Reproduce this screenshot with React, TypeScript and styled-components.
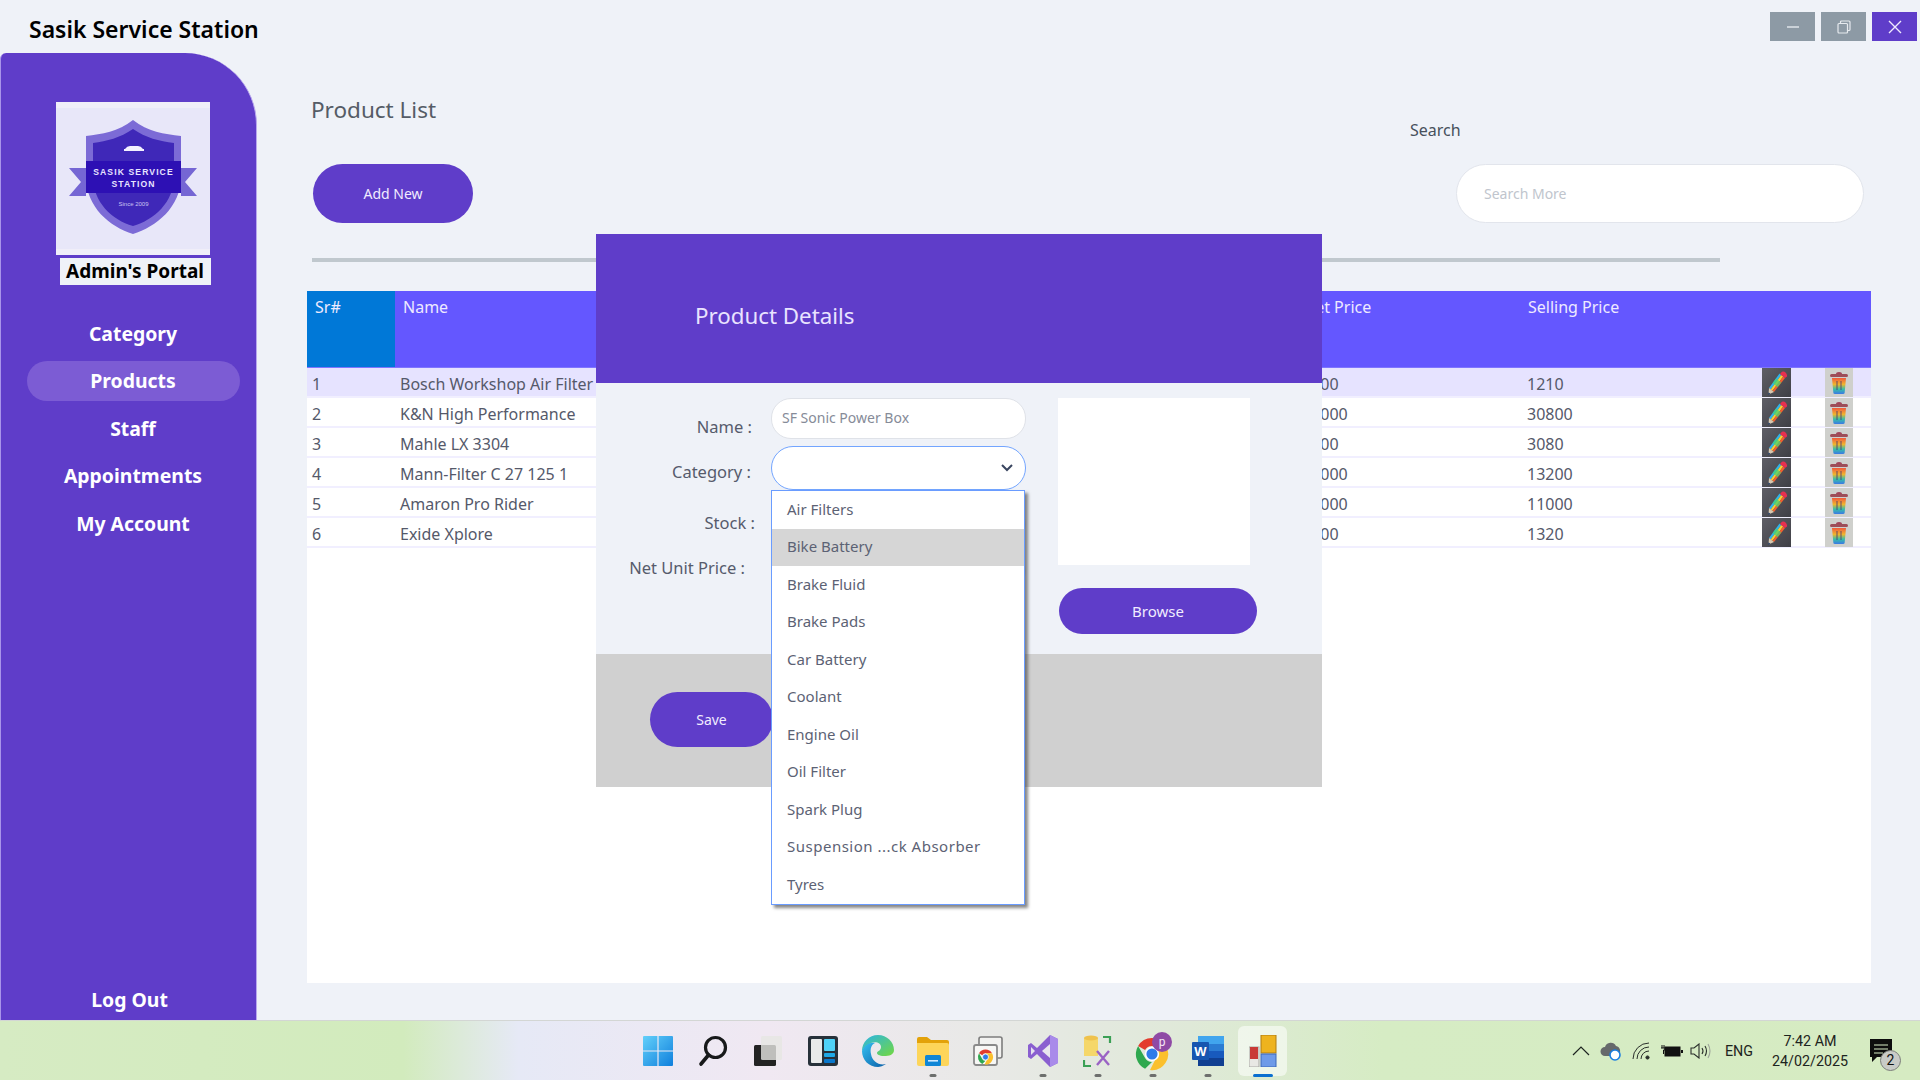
import React from "react";
import styled, { createGlobalStyle } from "styled-components";

const PURPLE = "#5f3dc9";
const BG = "#eff2f8";
const FONT = '"Noto Sans", "Open Sans", sans-serif';

const GlobalStyle = createGlobalStyle`
  html, body {
    margin: 0;
    padding: 0;
    background: ${BG};
    overflow: hidden;
  }
  * {
    box-sizing: border-box;
  }
`;

const Screen = styled.div`
  width: 1920px;
  height: 1080px;
  display: flex;
  flex-direction: column;
  position: relative;
  overflow: hidden;
  font-family: ${FONT};
  background: ${BG};
`;

const TitleBar = styled.div`
  height: 53px;
  flex: none;
  display: flex;
  justify-content: space-between;
  padding: 12px 3px 0 29px;
`;

const AppTitle = styled.h1`
  margin: 1px 0 0;
  font-size: 23px;
  line-height: 32px;
  font-weight: 600;
  color: #000;
`;

const WindowButtons = styled.div`
  display: flex;
  gap: 6px;
`;

const WindowButton = styled.div<{ $close?: boolean }>`
  width: 45px;
  height: 29px;
  display: flex;
  align-items: center;
  justify-content: center;
  background: ${(p) => (p.$close ? PURPLE : "#8d9aa5")};
`;

const Middle = styled.div`
  flex: 1;
  display: flex;
  min-height: 0;
`;

const Sidebar = styled.aside`
  width: 257px;
  flex: none;
  display: flex;
  flex-direction: column;
  align-items: center;
  background: ${PURPLE};
  border-top-right-radius: 72px;
  border-top-left-radius: 6px;
  border-right: 1px solid #b9a8ee;
  border-left: 1px solid #a994ea;
  padding: 49px 0 0 10px;
`;

const LogoBox = styled.div`
  width: 154px;
  height: 153px;
  margin-right: 1px;
`;

const PortalLabel = styled.div`
  width: 151px;
  height: 27px;
  margin-top: 3px;
  margin-left: 3px;
  background: ${BG};
  color: #000;
  font-size: 19px;
  line-height: 26px;
  font-weight: 700;
  text-align: center;
  white-space: nowrap;
`;

const NavList = styled.nav`
  width: 100%;
  margin-top: 28px;
  display: flex;
  flex-direction: column;
  align-items: center;
`;

const NavItem = styled.div<{ $active?: boolean }>`
  width: 213px;
  height: 40px;
  margin-bottom: 7.5px;
  margin-left: -1px;
  border-radius: 20px;
  display: flex;
  align-items: center;
  justify-content: center;
  color: #fff;
  font-size: 19.4px;
  font-weight: 700;
  white-space: nowrap;
  background: ${(p) => (p.$active ? "#7c5cd4" : "transparent")};
`;

const LogOut = styled(NavItem)`
  margin-top: auto;
  margin-bottom: 1px;
  margin-left: -8px;
`;

const Main = styled.main`
  flex: 1;
  min-width: 0;
  padding: 0 49px 0 50px;
  display: flex;
  flex-direction: column;
`;

const Toolbar = styled.div`
  height: 170px;
  flex: none;
  display: flex;
  justify-content: space-between;
  padding: 0 7px 0 6px;
`;

const ToolbarLeft = styled.div`
  display: flex;
  flex-direction: column;
  align-items: flex-start;
`;

const PageTitle = styled.h2`
  margin: 40px 0 0 -2px;
  font-size: 22.5px;
  line-height: 34px;
  font-weight: 400;
  color: #555c66;
`;

const PillButton = styled.button<{ $w: number; $h: number }>`
  width: ${(p) => p.$w}px;
  height: ${(p) => p.$h}px;
  border: none;
  border-radius: ${(p) => p.$h / 2}px;
  background: ${PURPLE};
  color: #f1ecff;
  font-family: ${FONT};
  font-size: 14px;
  padding: 0;
  flex: none;
`;

const AddButton = styled(PillButton)`
  margin-top: 37px;
`;

const SearchArea = styled.div`
  display: flex;
  align-items: flex-start;
`;

const SearchLabel = styled.div`
  margin-top: 66px;
  margin-right: -4px;
  width: 50px;
  font-size: 16px;
  line-height: 22px;
  color: #47505c;
  white-space: nowrap;
`;

const SearchInput = styled.input`
  margin-top: 111px;
  width: 408px;
  height: 59px;
  border: 1.5px solid #e2e5ec;
  border-radius: 30px;
  background: #fff;
  padding: 0 27px;
  font-family: ${FONT};
  font-size: 14px;
  outline: none;
  &::placeholder {
    color: #c0c5cd;
  }
`;

const Divider = styled.div`
  width: 1408px;
  height: 4px;
  margin: 35px 0 29px 5px;
  background: #c0c8ce;
  flex: none;
`;

const Table = styled.div`
  width: 1564px;
  height: 692px;
  background: #fff;
  flex: none;
`;

const COLUMNS = "88px 902px 225px 240px 29px 34px 28px 18px";

const HeaderRow = styled.div`
  display: grid;
  grid-template-columns: ${COLUMNS};
  height: 77px;
  background: #6457ff;
  border-bottom: 1px solid #7f75ff;
`;

const HeaderCell = styled.div<{ $blue?: boolean; $pad?: number }>`
  padding: 4px 0 0 ${(p) => p.$pad ?? 6}px;
  font-size: 16px;
  line-height: 24px;
  color: #eeeaff;
  white-space: nowrap;
  background: ${(p) => (p.$blue ? "#0078d7" : "transparent")};
`;

const Row = styled.div<{ $selected?: boolean }>`
  display: grid;
  grid-template-columns: ${COLUMNS};
  height: 30px;
  border-bottom: 2px solid #f1efff;
  background: ${(p) => (p.$selected ? "#e6e3ff" : "#fff")};
`;

const Cell = styled.div`
  padding: 0 0 0 5px;
  font-size: 16px;
  line-height: 32px;
  height: 28px;
  color: #55596a;
  white-space: nowrap;
  overflow: hidden;
`;

const ActionCell = styled.div<{ $dark?: boolean }>`
  height: 29px;
  display: flex;
  align-items: center;
  justify-content: center;
  background: ${(p) =>
    p.$dark ? "linear-gradient(135deg, #5f5f66, #3f3f46)" : "#cfd0cc"};
`;

const Modal = styled.section`
  position: absolute;
  left: 596px;
  top: 234px;
  width: 726px;
  height: 553px;
  display: flex;
  flex-direction: column;
  background: ${BG};
`;

const ModalHeader = styled.header`
  height: 149px;
  flex: none;
  background: ${PURPLE};
  padding: 64px 0 0 99px;
  color: #e9e3ff;
  font-size: 22.3px;
  line-height: 35px;
`;

const ModalBody = styled.div`
  height: 271px;
  flex: none;
  display: flex;
  padding-top: 15px;
`;

const FormColumn = styled.div`
  width: 430px;
  flex: none;
`;

const Field = styled.div<{ $gap: number; $h: number }>`
  display: grid;
  grid-template-columns: 175px 255px;
  height: ${(p) => p.$h}px;
  margin-top: ${(p) => p.$gap}px;
`;

const FieldLabel = styled.label<{ $top: number; $right: number }>`
  padding-top: ${(p) => p.$top}px;
  padding-right: ${(p) => p.$right}px;
  text-align: right;
  font-size: 16.5px;
  line-height: 24px;
  color: #565b6c;
  white-space: nowrap;
`;

const TextInput = styled.input`
  width: 100%;
  height: 100%;
  border: 1.5px solid #dfe2e8;
  border-radius: 20px;
  background: #fff;
  padding: 0 10px 2px;
  font-family: ${FONT};
  font-size: 14px;
  color: #868b98;
  outline: none;
  margin: 0;
`;

const SelectWrap = styled.div`
  position: relative;
`;

const SelectBox = styled.div`
  height: 100%;
  border: 1.5px solid #73a5ff;
  border-radius: 22px;
  background: #fff;
  display: flex;
  align-items: center;
  justify-content: flex-end;
  padding-right: 12px;
`;

const Dropdown = styled.ul`
  position: absolute;
  left: 0;
  top: 44px;
  z-index: 2;
  width: 254px;
  height: 415px;
  margin: 0;
  padding: 0;
  list-style: none;
  background: #fff;
  border: 1.5px solid #6a9cff;
  box-shadow: 3px 3px 3px rgba(70, 70, 70, 0.65);
`;

const DropdownItem = styled.li<{ $hot?: boolean; $wide?: boolean }>`
  height: 37.5px;
  padding: 0 0 2px 15px;
  display: flex;
  align-items: center;
  font-size: 15px;
  color: #5c6274;
  white-space: nowrap;
  letter-spacing: ${(p) => (p.$wide ? "0.5px" : "0")};
  background: ${(p) => (p.$hot ? "#d6d6d6" : "transparent")};
`;

const ImageColumn = styled.div`
  margin-left: 32px;
  display: flex;
  flex-direction: column;
  align-items: flex-start;
`;

const ImagePreview = styled.div`
  width: 192px;
  height: 167px;
  background: #fff;
`;

const BrowseButton = styled(PillButton)`
  margin: 23px 0 0 1px;
  font-size: 15px;
`;

const ModalFooter = styled.footer`
  flex: 1;
  background: #d0d0d0;
  padding: 38px 0 0 54px;
`;

const Taskbar = styled.footer`
  height: 60px;
  flex: none;
  position: relative;
  display: flex;
  justify-content: center;
  border-top: 1px solid #d3d6d4;
  background: linear-gradient(
    90deg,
    #d6ebc3 0%,
    #d2ebbd 21%,
    #e6e9f6 27%,
    #f0e8f2 40%,
    #e8e9e6 52%,
    #dfe9d8 62%,
    #d6ecc4 72%,
    #d6ebc2 100%
  );
`;

const TaskIcons = styled.div`
  display: flex;
  height: 100%;
`;

const TaskIcon = styled.div<{ $active?: boolean }>`
  position: relative;
  width: 55px;
  height: 100%;
  display: flex;
  align-items: center;
  justify-content: center;
  &::before {
    content: "";
    display: ${(p) => (p.$active ? "block" : "none")};
    position: absolute;
    left: 3px;
    right: 3px;
    top: 5px;
    bottom: 4px;
    border-radius: 6px;
    background: rgba(255, 255, 255, 0.55);
  }
  & > svg {
    position: relative;
  }
`;

const RunDot = styled.span<{ $active?: boolean }>`
  position: absolute;
  bottom: 3px;
  left: 50%;
  transform: translateX(-50%);
  width: ${(p) => (p.$active ? 20 : 7)}px;
  height: 3px;
  border-radius: 2px;
  background: ${(p) => (p.$active ? "#0a6fd0" : "#6d6f6d")};
`;

const Tray = styled.div`
  position: absolute;
  right: 0;
  top: 0;
  height: 100%;
  display: flex;
  align-items: center;
  padding-right: 26px;
  color: #1d2420;
  font-family: "Roboto", "Noto Sans", sans-serif;
`;

const TraySlot = styled.div<{ $w: number }>`
  width: ${(p) => p.$w}px;
  display: flex;
  justify-content: center;
  align-items: center;
`;

const TrayText = styled.div`
  font-size: 14.3px;
  text-align: center;
  line-height: 20px;
  white-space: nowrap;
`;

const NotifyWrap = styled.div`
  position: relative;
  width: 26px;
  height: 26px;
  margin-left: 10px;
`;

const NotifyBadge = styled.span`
  position: absolute;
  right: -7px;
  bottom: -7px;
  width: 21px;
  height: 21px;
  border-radius: 50%;
  background: #c9cbc7;
  border: 1px solid #7c7e7a;
  font-size: 14px;
  line-height: 19px;
  text-align: center;
  color: #111;
`;

const products = [
  { name: "Bosch Workshop Air Filter", net: "1100", sell: "1210" },
  { name: "K&N High Performance", net: "28000", sell: "30800" },
  { name: "Mahle LX 3304", net: "2800", sell: "3080" },
  { name: "Mann-Filter C 27 125 1", net: "12000", sell: "13200" },
  { name: "Amaron Pro Rider", net: "10000", sell: "11000" },
  { name: "Exide Xplore", net: "1200", sell: "1320" },
];

const categories = [
  "Air Filters",
  "Bike Battery",
  "Brake Fluid",
  "Brake Pads",
  "Car Battery",
  "Coolant",
  "Engine Oil",
  "Oil Filter",
  "Spark Plug",
  "Suspension ...ck Absorber",
  "Tyres",
];

const Logo = () => (
  <svg width="154" height="153" viewBox="0 0 154 153">
    <rect width="154" height="153" fill="#f0eef9" />
    <rect y="6" width="154" height="141" fill="#e8e7f9" />
    <path d="M77 18 C92 30 108 32 125 34 V75 C125 105 100 125 77 132 C54 125 30 105 30 75 V34 C46 32 62 30 77 18Z" fill="#7c6bd6" />
    <path d="M77 27 C90 36 103 39 118 41 V75 C118 100 98 118 77 124 C56 118 37 100 37 75 V41 C51 39 64 36 77 27Z" fill="#3f28b8" />
    <path d="M30 66 L13 66 L25 80 L13 94 L30 94Z M125 66 L141 66 L129 80 L141 94 L125 94Z" fill="#7566d4" />
    <rect x="30" y="59" width="95" height="32" fill="#2d10b4" />
    <path d="M69 47 q2 -3 5 -3 h8 q3 0 5 3 h1 v2 h-20 v-2z" fill="#f3f1ff" />
    <text x="77.5" y="73" textAnchor="middle" fontFamily="Liberation Sans, sans-serif" fontWeight="700" fontSize="8.6" letterSpacing="1.1" fill="#e8e4ff">SASIK SERVICE</text>
    <text x="77.5" y="85" textAnchor="middle" fontFamily="Liberation Sans, sans-serif" fontWeight="700" fontSize="8.6" letterSpacing="1.1" fill="#e8e4ff">STATION</text>
    <text x="77.5" y="104" textAnchor="middle" fontFamily="Liberation Sans, sans-serif" fontSize="6" fill="#c9c3f2">Since 2009</text>
  </svg>
);

// three long stripes so the pencil reads as rainbow, not a single yellow bar
const PencilIcon = () => (
  <svg width="24" height="26" viewBox="0 0 24 26">
    <path d="M14.5 3.6 L16.2 5 L5.7 19.4 L4 18Z" fill="#2fb4ec" />
    <path d="M16.2 5 L18.2 6.6 L7.5 20.8 L5.7 19.4Z" fill="#f6cf34" />
    <path d="M18.2 6.6 L20 8 L9 22 L7.5 20.8Z" fill="#f2602f" />
    <path d="M11 8.4 L16.2 12.5 L12.6 17.2 L7.6 13Z" fill="#45d46f" fillOpacity="0.75" />
    <path d="M15 4 L17 1.8 Q19 1 21 3 Q22.5 5 22 6.5 L20 8Z" fill="#e6304f" />
    <path d="M4 18 L9 22 L3.5 24.5Z" fill="#d8c8b0" />
    <path d="M3.5 22.5 L5.3 23.6 L3 25Z" fill="#1e3a66" />
  </svg>
);

const TrashIcon = () => (
  <svg width="20" height="24" viewBox="0 0 20 24">
    <defs>
      <linearGradient id="trashGrad" x1="0" y1="0" x2="0" y2="1">
        <stop offset="0" stopColor="#ef5a3c" />
        <stop offset="0.4" stopColor="#f0b52c" />
        <stop offset="0.7" stopColor="#35bfa8" />
        <stop offset="1" stopColor="#3b79e6" />
      </linearGradient>
    </defs>
    <path d="M7 3 Q7 1 10 1 Q13 1 13 3Z" fill="#a0455a" />
    <rect x="1" y="3" width="18" height="3" rx="1.5" fill="#9d4d58" />
    <path d="M3 7 H17 L15.6 22 Q15.5 23 14 23 H6 Q4.5 23 4.4 22Z" fill="url(#trashGrad)" />
    <path d="M8 10 V19 M12 10 V19" stroke="#4a3b70" strokeOpacity="0.7" strokeWidth="1.2" />
  </svg>
);

const WinIcon = () => (
  <svg width="30" height="30" viewBox="0 0 30 30">
    <defs>
      <linearGradient id="winGrad" x1="0" y1="0" x2="1" y2="1">
        <stop offset="0" stopColor="#63d0fa" />
        <stop offset="1" stopColor="#0f7fdc" />
      </linearGradient>
    </defs>
    <path d="M0 1 Q0 0 1 0 H14.4 V14.4 H0Z M15.6 0 H29 Q30 0 30 1 V14.4 H15.6Z M0 15.6 H14.4 V30 H1 Q0 30 0 29Z M15.6 15.6 H30 V29 Q30 30 29 30 H15.6Z" fill="url(#winGrad)" />
  </svg>
);

const SearchIcon = () => (
  <svg width="30" height="32" viewBox="0 0 30 32">
    <circle cx="17.5" cy="12.5" r="10" fill="none" stroke="#17191a" strokeWidth="3.2" />
    <path d="M10.5 20 L3 29" stroke="#17191a" strokeWidth="3.6" strokeLinecap="round" />
  </svg>
);

const TaskViewIcon = () => (
  <svg width="30" height="32" viewBox="0 0 30 32">
    <rect x="1" y="10" width="22" height="21" rx="1.5" fill="#232323" />
    <rect x="8" y="1" width="21" height="24" rx="1.5" fill="#e6e6e2" fillOpacity="0.8" />
  </svg>
);

const WidgetsIcon = () => (
  <svg width="30" height="30" viewBox="0 0 30 30">
    <rect width="30" height="30" rx="3" fill="#27313a" />
    <rect x="3" y="3" width="11" height="24" rx="1" fill="#e8eaea" />
    <rect x="16" y="3" width="11" height="12" rx="1" fill="#50d3f8" />
    <rect x="16" y="17" width="11" height="4" rx="1" fill="#1ea8e6" />
    <rect x="16" y="23" width="11" height="4" rx="1" fill="#0a78cc" />
  </svg>
);

const EdgeIcon = () => (
  <svg width="32" height="32" viewBox="0 0 32 32">
    <defs>
      <linearGradient id="edgeA" x1="0" y1="0" x2="1" y2="1">
        <stop offset="0" stopColor="#35c1f1" />
        <stop offset="1" stopColor="#0a5ea8" />
      </linearGradient>
      <linearGradient id="edgeB" x1="0" y1="0" x2="1" y2="1">
        <stop offset="0" stopColor="#2bb4e8" />
        <stop offset="1" stopColor="#72d83f" />
      </linearGradient>
    </defs>
    <path d="M16 0 C25 0 32 7 32 15 C32 20 27 21 22 21 C17 21 15 19 15 18 C15 16 19 16 19 12 C19 8 14 6 9 8 C5 10 2 13 0 16 C0 7 7 0 16 0Z" fill="url(#edgeB)" />
    <path d="M0 16 C2 10 8 7 13 8 C9 10 8 14 9 19 C10 26 17 31 24 29 C21 31 18 32 16 32 C7 32 0 25 0 16Z" fill="url(#edgeA)" />
  </svg>
);

const FolderIcon = () => (
  <svg width="32" height="30" viewBox="0 0 32 30">
    <path d="M0 3 Q0 1 2 1 H10 L14 4 H30 Q32 4 32 6 V10 H0Z" fill="#e3a20a" />
    <path d="M0 7 H30 Q32 7 32 9 V28 Q32 30 30 30 H2 Q0 30 0 28Z" fill="#fdd55a" />
    <rect x="8" y="19" width="16" height="11" rx="1.5" fill="#0f86d6" />
    <rect x="11" y="24" width="10" height="1.6" fill="#cfeaff" />
  </svg>
);

const ChromeGlyph = ({ size, cx, cy }: { size: number; cx: number; cy: number }) => {
  const r = size / 2;
  return (
    <g transform={`translate(${cx - r} ${cy - r}) scale(${size / 24})`}>
      <path d="M12 0 A12 12 0 0 1 22.4 6 H12 A6 6 0 0 0 6.8 9 L1.6 6 A12 12 0 0 1 12 0Z" fill="#e33b2e" />
      <path d="M1.6 6 L6.8 15 A6 6 0 0 0 12 18 L6.8 23 A12 12 0 0 1 1.6 6Z" fill="#2fa84f" />
      <path d="M22.4 6 A12 12 0 0 1 10.5 24 L15 15.2 A6 6 0 0 0 12 6Z" fill="#fbc02d" />
      <circle cx="12" cy="12" r="4.8" fill="#2f7be8" stroke="#fff" strokeWidth="1.2" />
    </g>
  );
};

const ChromeAppsIcon = () => (
  <svg width="30" height="30" viewBox="0 0 30 30">
    <rect x="6" y="1" width="23" height="21" rx="2" fill="#f2f2f0" stroke="#7d7d7d" strokeWidth="1.6" />
    <rect x="1" y="9" width="23" height="20" rx="2" fill="#f7f7f5" stroke="#8a8a8a" strokeWidth="1.8" />
    <ChromeGlyph size={15} cx={12.5} cy={21} />
  </svg>
);

const VsIcon = () => (
  <svg width="30" height="32" viewBox="0 0 30 32">
    <path d="M22 0 L30 4 V28 L22 32 L9 19 L3 24 L0 22 V10 L3 8 L9 13Z" fill="#8a5fd0" />
    <path d="M3 12 L7 16 L3 20Z" fill="#e6e2ef" />
    <path d="M22 0 L30 4 V28 L22 32Z" fill="#a98bea" />
    <path d="M22 9 L22 23 L14 16Z" fill="#e8e6ee" />
  </svg>
);

const ToolIcon = () => (
  <svg width="30" height="32" viewBox="0 0 30 32">
    <rect x="1" y="3" width="14" height="18" fill="#f5d76a" />
    <ellipse cx="8" cy="3" rx="7" ry="2.6" fill="#efc24c" />
    <path d="M20 2 H27 V8 M1 25 V31 H8" fill="none" stroke="#3ba055" strokeWidth="2.2" />
    <path d="M14 30 L26 16 M26 30 L14 16" stroke="#9a63c4" strokeWidth="2.4" />
  </svg>
);

const ChromeProfileIcon = () => (
  <svg width="40" height="40" viewBox="0 0 40 40">
    <ChromeGlyph size={32} cx={19} cy={23} />
    <circle cx="29" cy="11" r="10" fill="#8f4aa5" />
    <text x="29" y="15" textAnchor="middle" fontFamily="Roboto, sans-serif" fontSize="12" fill="#f4e6f7">p</text>
  </svg>
);

const WordIcon = () => (
  <svg width="32" height="30" viewBox="0 0 32 30">
    <rect x="6" y="0" width="26" height="8" fill="#41a5ee" />
    <rect x="6" y="8" width="26" height="7" fill="#2b7cd3" />
    <rect x="6" y="15" width="26" height="7" fill="#185abd" />
    <rect x="6" y="22" width="26" height="8" fill="#103f91" />
    <rect x="0" y="6" width="17" height="18" rx="1" fill="#1756b0" />
    <text x="8.5" y="20" textAnchor="middle" fontFamily="Liberation Sans, sans-serif" fontWeight="700" fontSize="13" fill="#fff">W</text>
  </svg>
);

const AppIcon = () => (
  <svg width="28" height="32" viewBox="0 0 28 32">
    <rect x="0" y="12" width="10" height="20" fill="#e8e8e4" stroke="#a9a9a4" />
    <rect x="1" y="12" width="8" height="12" fill="#c93a36" />
    <rect x="12" y="0" width="15" height="18" fill="#eeb31e" stroke="#b07c12" />
    <rect x="12" y="19" width="15" height="13" fill="#6e9ae8" stroke="#3c68b8" />
  </svg>
);

const taskItems: { icon: React.ReactNode; run?: boolean; active?: boolean }[] = [
  { icon: <WinIcon /> },
  { icon: <SearchIcon /> },
  { icon: <TaskViewIcon /> },
  { icon: <WidgetsIcon /> },
  { icon: <EdgeIcon /> },
  { icon: <FolderIcon />, run: true },
  { icon: <ChromeAppsIcon /> },
  { icon: <VsIcon />, run: true },
  { icon: <ToolIcon />, run: true },
  { icon: <ChromeProfileIcon />, run: true },
  { icon: <WordIcon />, run: true },
  { icon: <AppIcon />, run: true, active: true },
];

export default function App() {
  return (
    <Screen>
      <GlobalStyle />
      <TitleBar>
        <AppTitle>Sasik Service Station</AppTitle>
        <WindowButtons>
          <WindowButton>
            <svg width="14" height="14" viewBox="0 0 14 14">
              <path d="M1 7 H13" stroke="#e6eaee" strokeWidth="1.4" />
            </svg>
          </WindowButton>
          <WindowButton>
            <svg width="14" height="14" viewBox="0 0 14 14" fill="none" stroke="#e6eaee" strokeWidth="1.2">
              <rect x="1" y="3.5" width="9.5" height="9.5" rx="1" />
              <path d="M3.5 3.5 V2 Q3.5 1 4.5 1 H12 Q13 1 13 2 V9.5 Q13 10.5 12 10.5 H10.5" />
            </svg>
          </WindowButton>
          <WindowButton $close>
            <svg width="14" height="14" viewBox="0 0 14 14">
              <path d="M1 1 L13 13 M13 1 L1 13" stroke="#efeaff" strokeWidth="1.4" />
            </svg>
          </WindowButton>
        </WindowButtons>
      </TitleBar>

      <Middle>
        <Sidebar>
          <LogoBox>
            <Logo />
          </LogoBox>
          <PortalLabel>Admin's Portal</PortalLabel>
          <NavList>
            <NavItem>Category</NavItem>
            <NavItem $active>Products</NavItem>
            <NavItem>Staff</NavItem>
            <NavItem>Appointments</NavItem>
            <NavItem>My Account</NavItem>
          </NavList>
          <LogOut>Log Out</LogOut>
        </Sidebar>

        <Main>
          <Toolbar>
            <ToolbarLeft>
              <PageTitle>Product List</PageTitle>
              <AddButton $w={160} $h={59}>Add New</AddButton>
            </ToolbarLeft>
            <SearchArea>
              <SearchLabel>Search</SearchLabel>
              <SearchInput placeholder="Search More" />
            </SearchArea>
          </Toolbar>
          <Divider />
          <Table>
            <HeaderRow>
              <HeaderCell $blue $pad={8}>Sr#</HeaderCell>
              <HeaderCell $pad={8}>Name</HeaderCell>
              <HeaderCell>Net Price</HeaderCell>
              <HeaderCell>Selling Price</HeaderCell>
            </HeaderRow>
            {products.map((item, i) => (
              <Row key={item.name} $selected={i === 0}>
                <Cell>{i + 1}</Cell>
                <Cell>{item.name}</Cell>
                <Cell>{item.net}</Cell>
                <Cell>{item.sell}</Cell>
                <ActionCell $dark>
                  <PencilIcon />
                </ActionCell>
                <span />
                <ActionCell>
                  <TrashIcon />
                </ActionCell>
              </Row>
            ))}
          </Table>
        </Main>
      </Middle>

      <Taskbar>
        <TaskIcons>
          {taskItems.map((t, i) => (
            <TaskIcon key={i} $active={t.active}>
              {t.icon}
              {t.run && <RunDot $active={t.active} />}
            </TaskIcon>
          ))}
        </TaskIcons>
        <Tray>
          <TraySlot $w={30}>
            <svg width="18" height="10" viewBox="0 0 18 10" fill="none" stroke="#1d2420" strokeWidth="1.2">
              <path d="M1 9 L9 1 L17 9" />
            </svg>
          </TraySlot>
          <TraySlot $w={30}>
            <svg width="22" height="20" viewBox="0 0 22 20">
              <path d="M5 15 A4.5 4.5 0 0 1 5 6 A6 6 0 0 1 16 5 A5 5 0 0 1 18 14 L15 15Z" fill="#66696b" />
              <circle cx="15" cy="14" r="5" fill="#fff" stroke="#1a7fe0" strokeWidth="1.6" />
            </svg>
          </TraySlot>
          <TraySlot $w={31}>
            <svg width="20" height="18" viewBox="0 0 20 18" fill="none" stroke="#2a2f2b" strokeWidth="1">
              <path d="M1 17 A16 16 0 0 1 17 1 M5 17 A12 12 0 0 1 17 5 M9 17 A8 8 0 0 1 17 9" />
              <circle cx="15.5" cy="15.5" r="1.6" fill="#2a2f2b" />
            </svg>
          </TraySlot>
          <TraySlot $w={29}>
            <svg width="22" height="14" viewBox="0 0 22 14">
              <rect x="4" y="3" width="15" height="9" fill="#111" stroke="#111" />
              <rect x="20" y="6" width="2" height="3" fill="#111" />
              <path d="M1 1 V4 M3 1 V4 M0 4 H4 V6 H2.5 V10" stroke="#111" fill="none" />
            </svg>
          </TraySlot>
          <TraySlot $w={30}>
            <svg width="22" height="16" viewBox="0 0 22 16" fill="none" stroke="#2a2f2b" strokeWidth="1.1">
              <path d="M1 5 H4 L9 1 V15 L4 11 H1Z" />
              <path d="M12 5 Q14 8 12 11 M15 3 Q18 8 15 13" />
              <path d="M18 1 Q22 8 18 15" stroke="#9ea59a" />
            </svg>
          </TraySlot>
          <TraySlot $w={46}>
            <TrayText>ENG</TrayText>
          </TraySlot>
          <TraySlot $w={96}>
            <TrayText>
              7:42 AM
              <br />
              24/02/2025
            </TrayText>
          </TraySlot>
          <NotifyWrap>
            <svg width="26" height="26" viewBox="0 0 26 26">
              <path d="M2 1 H24 V19 H9 L4 24 V19 H2Z" fill="#0d0d0d" />
              <path d="M6 7 H20 M6 11 H20 M6 15 H15" stroke="#d8ebc6" strokeWidth="1.2" />
            </svg>
            <NotifyBadge>2</NotifyBadge>
          </NotifyWrap>
        </Tray>
      </Taskbar>

      <Modal>
        <ModalHeader>Product Details</ModalHeader>
        <ModalBody>
          <FormColumn>
            <Field $gap={0} $h={39}>
              <FieldLabel $top={17} $right={19}>Name :</FieldLabel>
              <TextInput defaultValue="SF Sonic Power Box" />
            </Field>
            <Field $gap={9} $h={44}>
              <FieldLabel $top={14} $right={20}>Category :</FieldLabel>
              <SelectWrap>
                <SelectBox>
                  <svg width="12" height="8" viewBox="0 0 12 8" fill="none" stroke="#3a4660" strokeWidth="2">
                    <path d="M1 1 L6 6 L11 1" />
                  </svg>
                </SelectBox>
                <Dropdown>
                  {categories.map((c) => (
                    <DropdownItem key={c} $hot={c === "Bike Battery"} $wide={c.startsWith("Suspension")}>
                      {c}
                    </DropdownItem>
                  ))}
                </Dropdown>
              </SelectWrap>
            </Field>
            <Field $gap={15} $h={38}>
              <FieldLabel $top={6} $right={16}>Stock :</FieldLabel>
              <TextInput />
            </Field>
            <Field $gap={9} $h={38}>
              <FieldLabel $top={4} $right={26}>Net Unit Price :</FieldLabel>
              <TextInput />
            </Field>
          </FormColumn>
          <ImageColumn>
            <ImagePreview />
            <BrowseButton $w={198} $h={46}>Browse</BrowseButton>
          </ImageColumn>
        </ModalBody>
        <ModalFooter>
          <PillButton $w={123} $h={55}>Save</PillButton>
        </ModalFooter>
      </Modal>
    </Screen>
  );
}
